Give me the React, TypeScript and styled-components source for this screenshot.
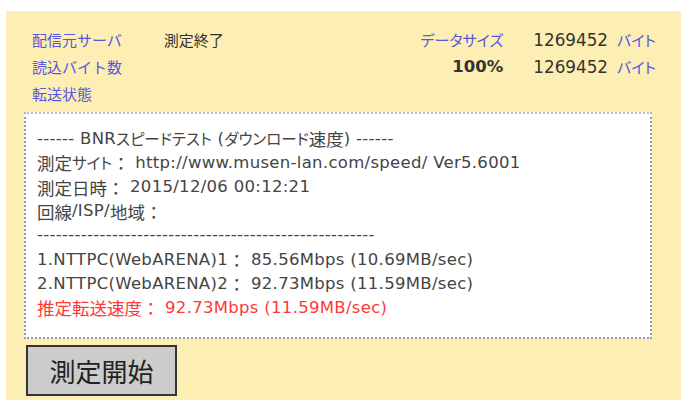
import React from "react";
import styled, {createGlobalStyle} from "styled-components";

const GlobalStyle = createGlobalStyle`
  body {
    margin: 0;
    background: #ffffff;
    font-family: "DejaVu Sans", "Noto Sans CJK JP", sans-serif;
  }
`;

const resultLines = [
  "------ BNRスピードテスト (ダウンロード速度) ------",
  "測定サイト： http://www.musen-lan.com/speed/ Ver5.6001",
  "測定日時： 2015/12/06 00:12:21",
  "回線/ISP/地域：",
  "-".repeat(54),
  "1.NTTPC(WebARENA)1： 85.56Mbps (10.69MB/sec)",
  "2.NTTPC(WebARENA)2： 92.73Mbps (11.59MB/sec)",
];
const summary = "推定転送速度： 92.73Mbps (11.59MB/sec)";

const KANA = /^[\u30a0-\u30ff]+$/;
const CJK = /^[\u3000-\u303f\u4e00-\u9fff\uff00-\uffef]+$/;

function Runs({text}: {text: string}) {
  const parts = text.split(/([\u30a0-\u30ff]+|[\u3000-\u303f\u4e00-\u9fff\uff00-\uffef]+)/).filter(Boolean);
  return (
    <>
      {parts.map((p, i) =>
        KANA.test(p) ? <Kana key={i}>{p}</Kana> : CJK.test(p) ? <Kanji key={i}>{p}</Kanji> : <Latin key={i}>{p}</Latin>
      )}
    </>
  );
}

export default function App() {
  return (
    <>
      <GlobalStyle />
      <Panel>
        <StatusGrid>
          <Column>
            <Row>
              <Label>配信元サーバ</Label>
              <Value>測定終了</Value>
            </Row>
            <Row>
              <Label>読込バイト数</Label>
            </Row>
            <Row>
              <Label>転送状態</Label>
            </Row>
          </Column>
          <RightColumn>
            <Row>
              <HeadCell><Label $tight>データサイズ</Label></HeadCell>
              <Number>1269452</Number>
              <Label $tight>バイト</Label>
            </Row>
            <Row>
              <HeadCell><Percent>100%</Percent></HeadCell>
              <Number>1269452</Number>
              <Label $tight>バイト</Label>
            </Row>
          </RightColumn>
        </StatusGrid>
        <ResultBox>
          {resultLines.map((line, i) => (
            <Line key={i}><Runs text={line} /></Line>
          ))}
          <Line $alert><Runs text={summary} /></Line>
        </ResultBox>
        <StartButton>測定開始</StartButton>
      </Panel>
    </>
  );
}

const Panel = styled.div`
  margin: 11px 0 0 6px;
  width: 675px;
  height: 389px;
  box-sizing: border-box;
  background: #fdeeb3;
  padding: 15px 0 0 18px;
`;
const StatusGrid = styled.div`
  display: flex;
  justify-content: space-between;
  width: 632px;
  padding-left: 8px;
  box-sizing: border-box;
`;
const Column = styled.div`
  display: flex;
  flex-direction: column;
`;
const RightColumn = styled(Column)`
  align-items: flex-end;
`;
const Row = styled.div`
  display: flex;
  align-items: center;
  height: 27px;
  font-size: 15px;
  white-space: nowrap;
`;
const Label = styled.span<{$tight?: boolean}>`
  color: #5656e0;
  font-family: "Noto Sans CJK JP", sans-serif;
  font-feature-settings: ${(p) => (p.$tight ? '"palt"' : "normal")};
`;
const Value = styled.span`
  color: #333333;
  margin-left: 42px;
  font-family: "Noto Sans CJK JP", sans-serif;
`;
const HeadCell = styled.span`
  display: inline-block;
  min-width: 80px;
  text-align: right;
`;
const Percent = styled.span`
  font-family: "DejaVu Sans", sans-serif;
  font-weight: bold;
  font-size: 16.5px;
  color: #333333;
`;
const Number = styled.span`
  font-family: "DejaVu Sans", sans-serif;
  color: #333333;
  margin: 0 9px 0 30px;
  font-size: 16.8px;
`;
const ResultBox = styled.div`
  margin-top: 5px;
  width: 628px;
  height: 227px;
  box-sizing: border-box;
  background: #ffffff;
  border: 2px dotted #999999;
  border-top-color: #bbbbbb;
  padding: 13px 0 0 11px;
`;
const Line = styled.div<{$alert?: boolean}>`
  height: 24.15px;
  display: flex;
  align-items: center;
  font-size: 16.5px;
  line-height: 1;
  white-space: pre;
  color: ${(p) => (p.$alert ? "#ff3838" : "#444444")};
`;
const Latin = styled.span`
  font-family: "DejaVu Sans", sans-serif;
  letter-spacing: 0.3px;
`;
const Kanji = styled.span`
  font-family: "Noto Sans CJK JP", sans-serif;
  font-size: 17.5px;
`;
const Kana = styled(Kanji)`
  font-size: 15.5px;
  font-feature-settings: "palt";
`;
const StartButton = styled.button`
  display: block;
  margin: 6px 0 0 2px;
  width: 151px;
  height: 51px;
  background: #cccccc;
  border: 2px solid #333333;
  font-family: "Noto Sans CJK JP", sans-serif;
  font-size: 26px;
  color: #222222;
  padding: 0;
`;
